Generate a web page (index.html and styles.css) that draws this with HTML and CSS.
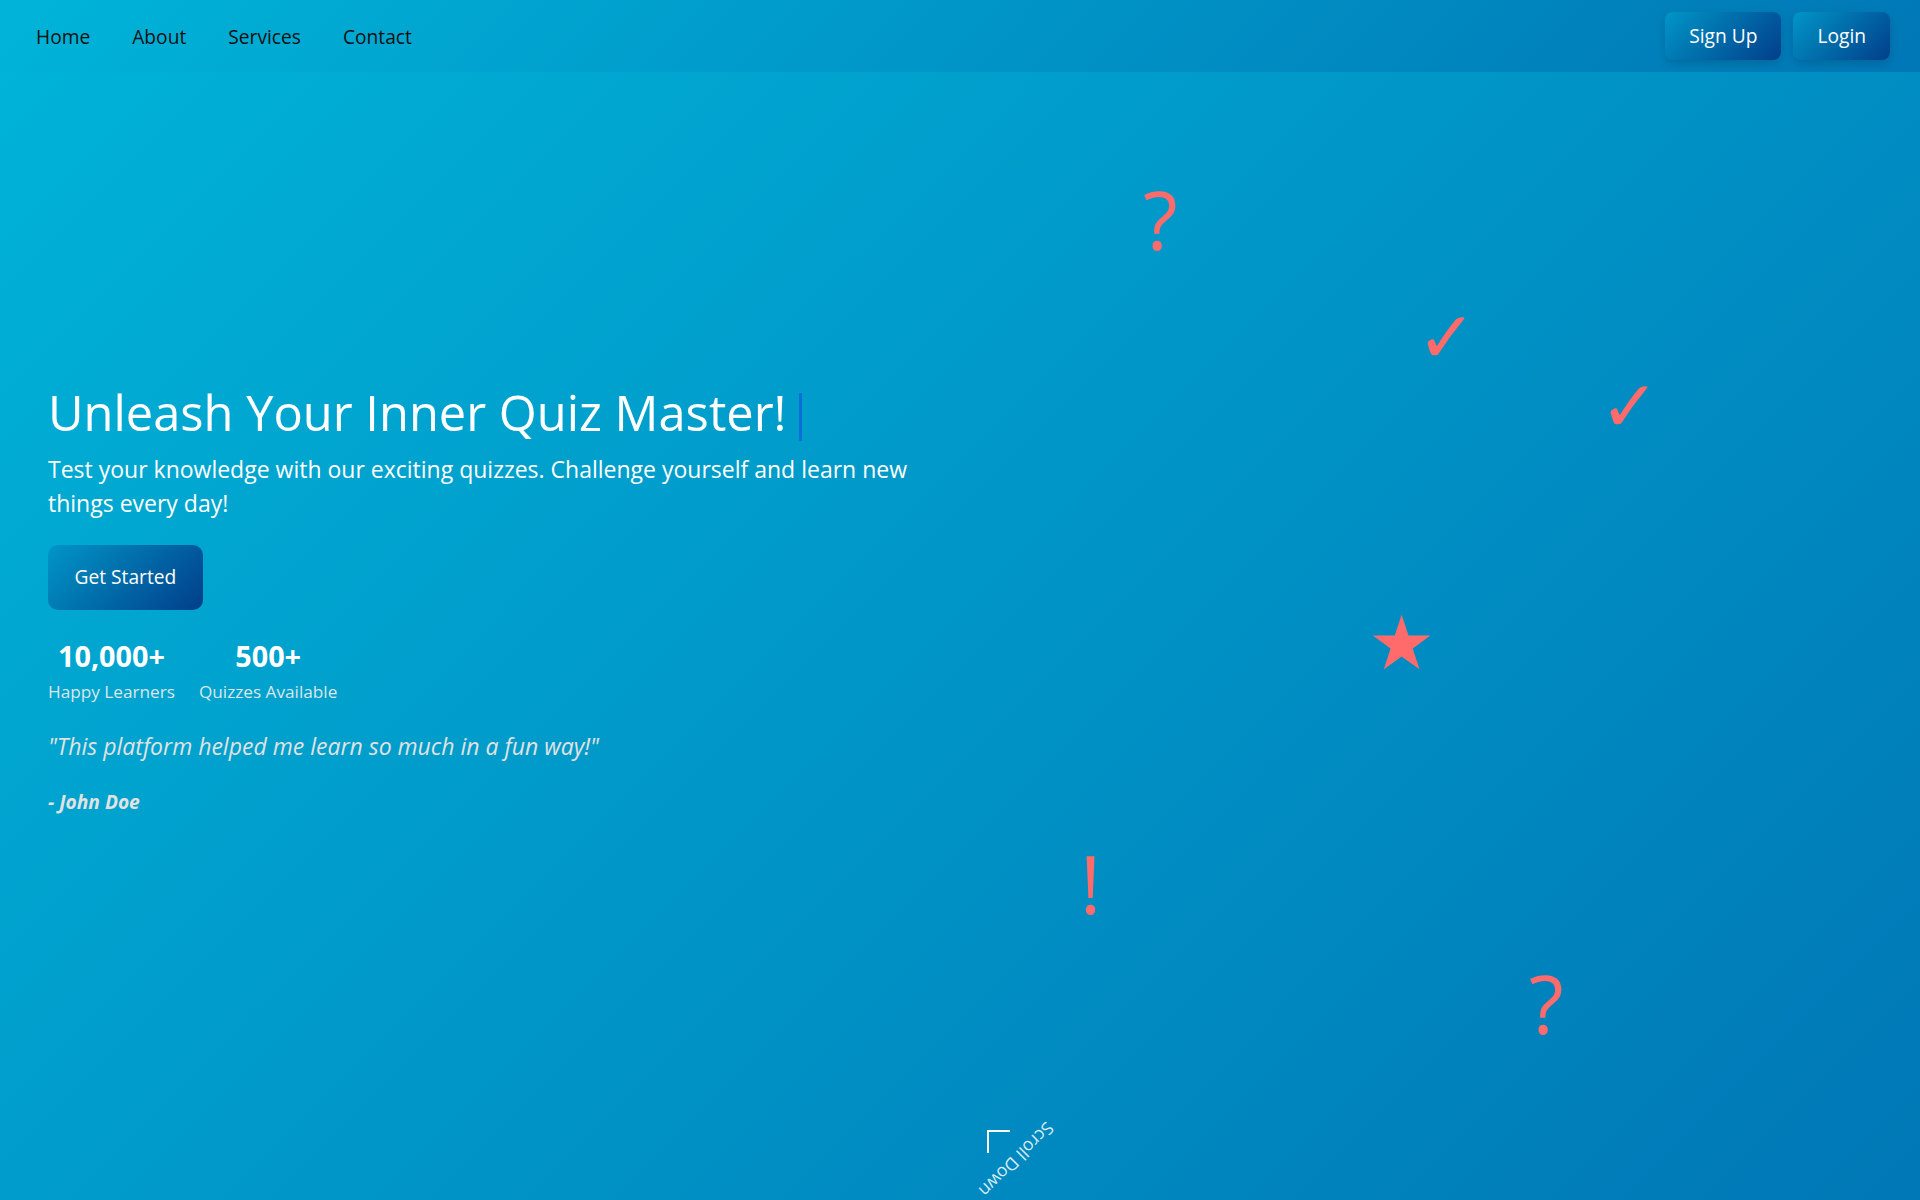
FILE: index.html
```html
<!DOCTYPE html>
<html lang="en">
<head>
<meta charset="UTF-8">
<title>Quiz Master</title>
<link rel="stylesheet" href="styles.css">
</head>
<body>
<nav class="navbar">
  <ul class="nav-links">
    <li><a href="#">Home</a></li>
    <li><a href="#">About</a></li>
    <li><a href="#">Services</a></li>
    <li><a href="#">Contact</a></li>
  </ul>
  <div class="nav-actions">
    <button class="btn btn-nav">Sign Up</button>
    <button class="btn btn-nav">Login</button>
  </div>
</nav>

<section class="hero">
  <div class="hero-content">
    <h1 class="hero-title">Unleash Your Inner Quiz Master!<span class="caret"></span></h1>
    <p class="hero-sub">Test your knowledge with our exciting quizzes. Challenge yourself and learn new things every day!</p>
    <button class="btn btn-cta">Get Started</button>
    <div class="stats">
      <div class="stat">
        <div class="stat-num">10,000+</div>
        <div class="stat-label">Happy Learners</div>
      </div>
      <div class="stat">
        <div class="stat-num">500+</div>
        <div class="stat-label">Quizzes Available</div>
      </div>
    </div>
    <blockquote class="testimonial">
      <p class="quote">"This platform helped me learn so much in a fun way!"</p>
      <cite class="author">- John Doe</cite>
    </blockquote>
  </div>

  <span class="float f-q1">?</span>
  <span class="float f-c1">✓</span>
  <span class="float f-c2">✓</span>
  <span class="float f-star">★</span>
  <span class="float f-ex">!</span>
  <span class="float f-q2">?</span>

  <div class="scroll-arrow"></div>
  <div class="scroll-text">Scroll Down</div>
</section>
</body>
</html>
```

FILE: styles.css
```css
* {
  box-sizing: border-box;
}

html, body {
  margin: 0;
  padding: 0;
}

body {
  font-family: "Open Sans", "DejaVu Sans", sans-serif;
  color: #fff;
  background: linear-gradient(135deg, #00b4d8 0%, #0077b6 100%);
  min-height: 100vh;
  overflow: hidden;
}

.navbar {
  position: fixed;
  top: 0;
  left: 0;
  right: 0;
  height: 72px;
  display: flex;
  align-items: center;
  justify-content: space-between;
  padding: 0 30px 0 36px;
  background: linear-gradient(135deg, #00b4d8 0%, #0077b6 100%);
  z-index: 10;
}

.nav-links {
  list-style: none;
  display: flex;
  gap: 42px;
  margin: 0;
  padding: 0;
}

.nav-links a {
  color: #111;
  text-decoration: none;
  font-size: 19.2px;
}

.nav-actions {
  display: flex;
  gap: 12px;
}

.btn {
  font-family: "Open Sans", sans-serif;
  color: #fff;
  border: none;
  background: linear-gradient(135deg, #0096c7 0%, #023e8a 100%);
  cursor: pointer;
  font-size: 19.2px;
  line-height: 1.362;
}

.btn-nav {
  height: 48px;
  padding: 0 24px;
  border-radius: 8px;
  box-shadow: 0 4px 10px rgba(0, 0, 0, 0.15);
}

.hero {
  position: relative;
  height: 1200px;
  display: flex;
  align-items: center;
  padding: 0 48px;
}

.hero-content {
  width: 900px;
}

.hero-title {
  margin: 0 0 10px;
  font-size: 48.8px;
  font-weight: 400;
  line-height: 57.6px;
  white-space: nowrap;
}

.caret {
  display: inline-block;
  width: 3px;
  height: 48px;
  margin-left: 12px;
  vertical-align: -10px;
  background: #0a6fd8;
}

.hero-sub {
  margin: 0 0 24px;
  font-size: 23px;
  line-height: 34.5px;
  width: 880px;
}

.btn-cta {
  display: block;
  height: 65px;
  padding: 0 26.5px;
  border-radius: 10px;
  margin-bottom: 26px;
}

.stats {
  display: flex;
  gap: 24px;
  margin-bottom: 27px;
}

.stat {
  text-align: center;
}

.stat-num {
  font-size: 28.8px;
  font-weight: 700;
  line-height: 39.2px;
  margin-bottom: 5px;
}

.stat-label {
  font-size: 17.2px;
  line-height: 24px;
  color: #dde6ea;
}

.testimonial {
  margin: 0;
}

.quote {
  margin: 0 0 27px;
  font-size: 23px;
  font-style: italic;
  line-height: 31.3px;
  color: #e2e2e2;
}

.author {
  display: block;
  font-size: 19.2px;
  font-weight: 700;
  font-style: italic;
  line-height: 26.2px;
  color: #e2e2e2;
}

.float {
  position: absolute;
  line-height: 1;
  color: #ff6b6b;
}

.f-q1 { left: 1143px; top: 179px; font-size: 80px; }
.f-q2 { left: 1529px; top: 963px; font-size: 80px; }
.f-ex { left: 1080px; top: 843px; font-size: 80px; }
.f-c1 { left: 1417px; top: 302px; font-size: 71px; font-family: "DejaVu Sans", sans-serif; }
.f-c2 { left: 1600px; top: 371px; font-size: 71px; font-family: "DejaVu Sans", sans-serif; }
.f-star { left: 1368px; top: 606px; font-size: 75px; font-family: "DejaVu Sans", sans-serif; }

.scroll-arrow {
  position: absolute;
  left: 987px;
  top: 1130px;
  width: 23px;
  height: 23px;
  border-top: 2px solid #fff;
  border-left: 2px solid #fff;
}

.scroll-text {
  position: absolute;
  left: 1017px;
  top: 1160px;
  font-size: 17.6px;
  color: rgba(255, 255, 255, 0.85);
  white-space: nowrap;
  transform: translate(-50%, -50%) rotate(135deg);
}
```
